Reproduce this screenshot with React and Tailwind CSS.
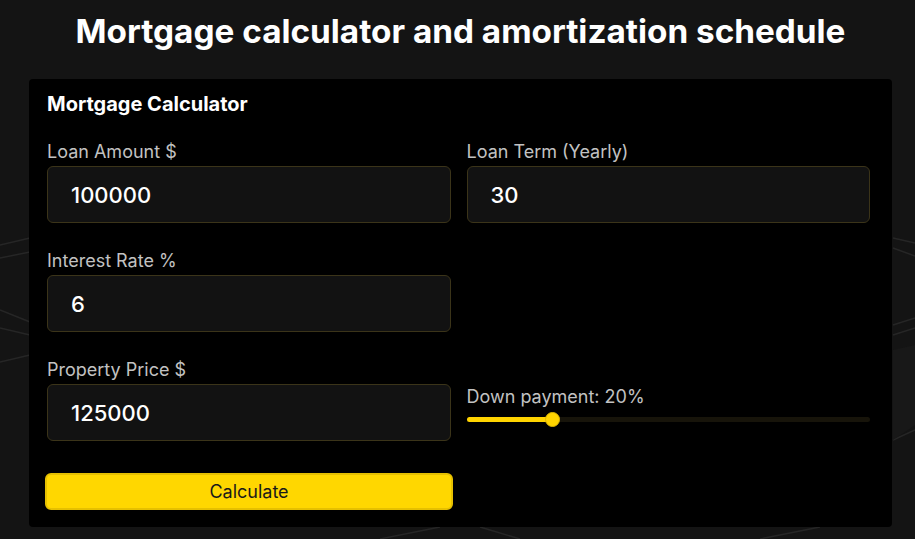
import React, { useState } from 'react';

const Field = ({ label, value, onChange }) => (
    <div className="flex flex-col">
        <label className="text-[18px] leading-[24px] text-[#c2c2c2]">{label}</label>
        <input
            type="text"
            value={value}
            onChange={(e) => onChange(e.target.value)}
            className="mt-[2px] h-[57px] w-full rounded-[6px] border border-[#3b3419] bg-[#121212] px-[23px] text-[22px] font-medium text-white outline-none"
        />
    </div>
);

const BgLines = () => (
    <svg className="absolute inset-0 h-full w-full" viewBox="0 0 915 539" preserveAspectRatio="none">
        <g stroke="#262626" strokeWidth="1.5" fill="none">
            <path d="M0 245 L30 238" />
            <path d="M0 258 L30 252" />
            <path d="M0 310 L30 322" />
            <path d="M0 328 L30 335" />
            <path d="M0 362 L30 355" />
            <path d="M893 238 L915 243" />
            <path d="M893 248 L915 256" />
            <path d="M893 325 L915 318" />
            <path d="M893 335 L915 328" />
            <path d="M893 440 L915 430" />
            <path d="M380 539 L440 527" />
            <path d="M480 527 L520 539" />
            <path d="M760 539 L820 527" />
        </g>
        <path d="M893 350 L915 345 L915 425 L893 440 Z" fill="#181818" />
    </svg>
);

export default function App() {
    const [loan, setLoan] = useState("100000");
    const [term, setTerm] = useState("30");
    const [rate, setRate] = useState("6");
    const [price, setPrice] = useState("125000");
    const [down] = useState(20);

    return (
        <div className="relative h-[539px] w-[915px] overflow-hidden bg-[#141414]" style={{ fontFamily: 'Inter, "Noto Sans", sans-serif' }}>
            <BgLines />
            <div className="relative">
                <h1 className="pl-[6px] pt-[11px] text-center text-[33.3px] font-bold leading-[40px] text-white">
                    Mortgage calculator and amortization schedule
                </h1>

                <div className="ml-[29px] mt-[28px] w-[863px] rounded-[4px] bg-black pb-[17px] pl-[18px] pr-[22px] pt-[13px]">
                    <h2 className="text-[20px] font-bold leading-[24px] text-white">Mortgage Calculator</h2>

                    <div className="mt-[24px] grid grid-cols-2 gap-x-[16px] gap-y-[26px]">
                        <Field label="Loan Amount $" value={loan} onChange={setLoan} />
                        <Field label="Loan Term (Yearly)" value={term} onChange={setTerm} />
                        <Field label="Interest Rate %" value={rate} onChange={setRate} />
                        <div></div>
                        <Field label="Property Price $" value={price} onChange={setPrice} />
                        <div className="flex flex-col pt-[27px]">
                            <p className="text-[18px] leading-[24px] text-[#c2c2c2]">Down payment: {down}%</p>
                            <div className="relative mt-[3px] h-[15px]">
                                <div className="absolute left-0 right-0 top-[5px] h-[5px] rounded-full bg-[#17140a]"></div>
                                <div className="absolute left-0 top-[5px] h-[5px] w-[85px] rounded-full bg-[#ffd400]"></div>
                                <div className="absolute left-[78px] top-0 h-[15px] w-[15px] rounded-full border border-[#e0b800] bg-[#ffd400]"></div>
                            </div>
                        </div>
                    </div>

                    <button className="ml-[-2px] mt-[32px] h-[37px] w-[408px] rounded-[6px] border-2 border-[#e6c000] bg-[#ffd700] text-[18px] text-[#1a1a1a]">
                        Calculate
                    </button>
                </div>
            </div>
        </div>
    );
}
